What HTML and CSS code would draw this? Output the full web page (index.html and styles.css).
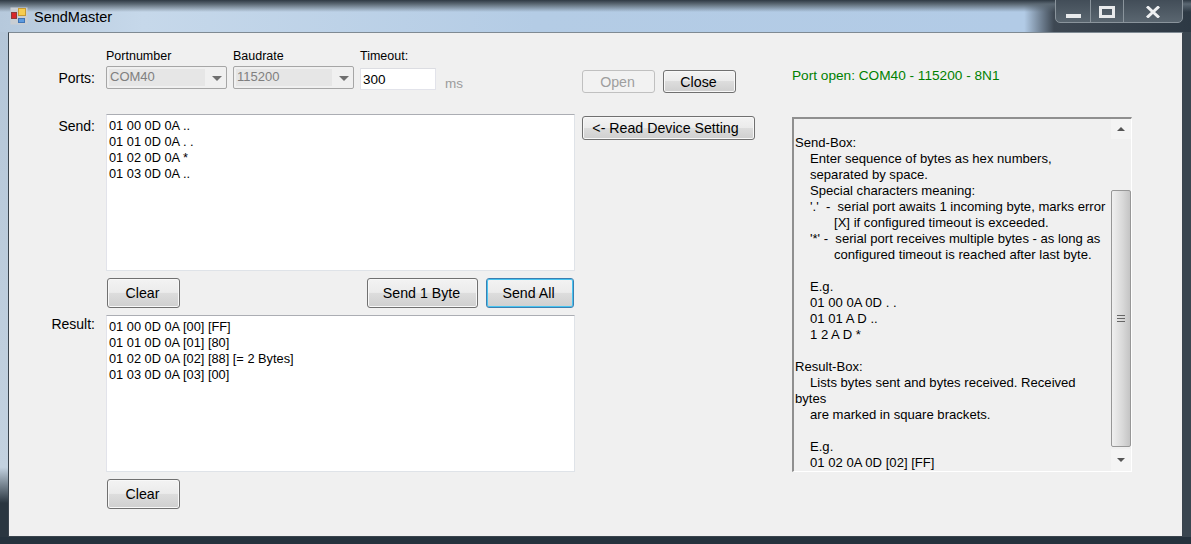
FILE: index.html
```html
<!DOCTYPE html>
<html lang="en">
<head>
<meta charset="utf-8">
<title>SendMaster</title>
<link rel="stylesheet" href="styles.css">
</head>
<body>
<div class="window">
  <div class="titlebar">
    <svg class="app-icon" width="18" height="18" viewBox="0 0 18 18"><rect x="0.5" y="0.5" width="17" height="17" fill="#c9ced3"/><rect x="1.5" y="5.5" width="5" height="6" fill="#d8272a" stroke="#8d3a3a"/><rect x="8.5" y="1.5" width="7" height="7" fill="#f6cd50" stroke="#c79b32"/><rect x="8.5" y="11.5" width="6" height="4" fill="#5c9be0" stroke="#3f74b5"/></svg>
    <span class="title">SendMaster</span>
    <div class="caption-btns">
      <div class="cap cap-min"><span class="min-glyph"></span></div>
      <div class="cap cap-max"><span class="max-glyph"></span></div>
      <div class="cap cap-close"><svg width="14" height="12" viewBox="0 0 14 12"><path d="M1 0.5 L13 11.5 M13 0.5 L1 11.5" stroke="#eef0f2" stroke-width="3"/></svg></div>
    </div>
  </div>
  <div class="panel">
    <div class="col-main">
      <div class="row ports-row">
        <div class="label ports-label">Ports:</div>
        <div class="field f-combo">
          <div class="cap-label">Portnumber</div>
          <div class="combo"><span class="combo-text">COM40</span><span class="combo-arrow"></span></div>
        </div>
        <div class="field f-combo">
          <div class="cap-label">Baudrate</div>
          <div class="combo"><span class="combo-text">115200</span><span class="combo-arrow"></span></div>
        </div>
        <div class="field f-time">
          <div class="cap-label">Timeout:</div>
          <div class="time-input">300</div>
        </div>
        <div class="ms">ms</div>
      </div>
      <div class="row send-row">
        <div class="label">Send:</div>
        <div class="textbox">01 00 0D 0A ..
01 01 0D 0A . .
01 02 0D 0A *
01 03 0D 0A ..</div>
      </div>
      <div class="row btn-row">
        <div class="label"></div>
        <div class="btn-wrap">
          <button class="btn btn-clear">Clear</button>
          <div class="btn-right">
            <button class="btn btn-send1">Send 1 Byte</button>
            <button class="btn btn-sendall">Send All</button>
          </div>
        </div>
      </div>
      <div class="row result-row">
        <div class="label">Result:</div>
        <div class="textbox">01 00 0D 0A [00] [FF]
01 01 0D 0A [01] [80]
01 02 0D 0A [02] [88] [= 2 Bytes]
01 03 0D 0A [03] [00]</div>
      </div>
      <div class="row clear-row">
        <div class="label"></div>
        <button class="btn btn-clear">Clear</button>
      </div>
    </div>
    <div class="col-mid">
      <div class="open-close">
        <button class="btn btn-open" disabled>Open</button>
        <button class="btn btn-close">Close</button>
      </div>
      <button class="btn btn-read">&lt;- Read Device Setting</button>
    </div>
    <div class="col-right">
      <div class="status">Port open: COM40 - 115200 - 8N1</div>
      <div class="help">
        <div class="help-text">
<p class="blank"></p>
<p>Send-Box:</p>
<p class="i1">Enter sequence of bytes as hex numbers,</p>
<p class="i1">separated by space.</p>
<p class="i1">Special characters meaning:</p>
<p class="i1">'.'  -  serial port awaits 1 incoming byte, marks error</p>
<p class="i2">[X] if configured timeout is exceeded.</p>
<p class="i1">'*' -  serial port receives multiple bytes - as long as</p>
<p class="i2">configured timeout is reached after last byte.</p>
<p class="blank"></p>
<p class="i1">E.g.</p>
<p class="i1">01 00 0A 0D . .</p>
<p class="i1">01 01 A D ..</p>
<p class="i1">1 2 A D *</p>
<p class="blank"></p>
<p>Result-Box:</p>
<p class="i1">Lists bytes sent and bytes received. Received</p>
<p>bytes</p>
<p class="i1">are marked in square brackets.</p>
<p class="blank"></p>
<p class="i1">E.g.</p>
<p class="i1">01 02 0A 0D [02] [FF]</p>
        </div>
        <div class="scrollbar">
          <div class="sb-btn sb-up"><span class="arrow-up"></span></div>
          <div class="sb-track">
            <div class="sb-thumb"><span class="grip"></span></div>
          </div>
          <div class="sb-btn sb-down"><span class="arrow-down"></span></div>
        </div>
      </div>
    </div>
  </div>
</div>
</body>
</html>
```
FILE: styles.css
```css
* { box-sizing: border-box; }
html, body { margin: 0; padding: 0; }
body {
  width: 1191px;
  height: 544px;
  overflow: hidden;
  font-family: "Liberation Sans", Arial, sans-serif;
  font-size: 14px;
  color: #000;
}
.window {
  width: 1191px;
  height: 544px;
  padding: 0 8px 7px;
  display: flex;
  flex-direction: column;
  background:
    linear-gradient(180deg, #2f3a44 0, #5b6873 4px, rgba(185,207,230,0) 12px),
    linear-gradient(90deg, #b6c9dc 0, #c6d8ea 12%, #b4cce5 45%, #b2cbe6 86%, #3e4853 88.5%, #2d3944 100%);
  position: relative;
}
.window::before {
  content: "";
  position: absolute;
  left: 0;
  top: 32px;
  width: 8px;
  height: 512px;
  background: linear-gradient(180deg, #b4c6d8 0, #c3d2e0 85%, #2a3640 92%);
}
.window::after {
  content: "";
  position: absolute;
  left: 0;
  right: 0;
  top: 32px;
  bottom: 0;
  background: linear-gradient(0deg, #25323d 0, #25323d 7px, transparent 7px), linear-gradient(90deg, transparent 0, transparent 1183px, #3a4650 1183px);
  pointer-events: none;
}
.titlebar {
  height: 32px;
  flex: none;
  display: flex;
  align-items: center;
  margin: 0 -8px;
  padding: 0 0 0 10px;
  position: relative;
}
.app-icon { flex: none; }
.title { margin-left: 6px; font-size: 14.5px; color: #000; padding-top: 1px; }
.caption-btns {
  position: absolute;
  top: -4px;
  left: 1055px;
  width: 128px;
  height: 27px;
  display: flex;
  border: 1px solid #8a949c;
  border-radius: 0 0 5px 5px;
  background: linear-gradient(180deg, #3f4a55, #5a6670);
}
.cap { display: flex; align-items: center; justify-content: center; height: 100%; border-right: 1px solid #8a949c; padding-top: 4px; }
.cap-min { width: 35px; }
.cap-max { width: 33px; }
.cap-close { flex: 1; border-right: 0; }
.min-glyph { width: 15px; height: 4px; margin-top: 8px; background: #e8eaec; }
.max-glyph { width: 16px; height: 12px; border: 3px solid #e8eaec; }
.panel {
  flex: 1;
  display: flex;
  position: relative;
  z-index: 1;
  background: #f0f0f0;
  border: 1px solid #3a444d;
  border-top-color: #7f8a93;
}
.col-main { width: 566px; flex: none; display: flex; flex-direction: column; }
.row { display: flex; }
.label { width: 97px; flex: none; text-align: right; padding-right: 11px; }
.ports-row { height: 81px; padding-top: 16px; }
.ports-label { padding-top: 21px; }
.field { display: flex; flex-direction: column; }
.f-combo { width: 121px; margin-right: 6px; }
.f-time { width: 76px; }
.cap-label { height: 17px; font-size: 12.5px; line-height: 15px; }
.combo {
  height: 23px;
  border: 1px solid #a6a6a6;
  border-radius: 2px;
  background: #f0f0f0;
  display: flex;
  align-items: stretch;
  padding: 2px 0 2px 2px;
}
.combo-text { width: 96px; background: #e6e6e6; color: #7f7f7f; font-size: 13px; line-height: 16px; padding-left: 1px; }
.combo-arrow {
  width: 0; height: 0;
  margin: 7px 0 0 7px;
  border-left: 5px solid transparent;
  border-right: 5px solid transparent;
  border-top: 5px solid #6f6f6f;
}
.time-input {
  height: 22px;
  margin-top: 2px;
  background: #fff;
  border: 1px solid #e2e3ea;
  border-top-color: #dcdde2;
  padding: 3px 2px 0;
  font-size: 13.5px;
  line-height: 16px;
}
.ms { color: #9c9c9c; font-size: 13.5px; margin: 27px 0 0 9px; }
.send-row, .result-row { height: 157px; }
.send-row .label { padding-top: 4px; }
.result-row .label { padding-top: 1px; }
.textbox {
  width: 469px;
  height: 157px;
  background: #fff;
  border: 1px solid #dfe3e8;
  border-top-color: #abadb3;
  border-left-color: #e2e3ea;
  padding: 3px 2px 0;
  line-height: 16px;
  font-size: 12.8px;
  white-space: pre;
}
.btn-row { height: 44px; padding-top: 7px; }
.btn-wrap { width: 469px; display: flex; justify-content: space-between; padding-right: 1px; padding-left: 1px; height: 30px; }
.btn-right { display: flex; gap: 8px; }
.clear-row { padding-top: 7px; }
.clear-row .btn { margin-left: 1px; }
.btn {
  font-family: "Liberation Sans", Arial, sans-serif;
  font-size: 14.2px;
  color: #000;
  height: 30px;
  padding: 0 2px 0 0;
  border: 1px solid #707070;
  border-radius: 3px;
  background: linear-gradient(180deg, #f3f3f3 0, #ebebeb 48%, #dddddd 50%, #cfcfcf 100%);
  box-shadow: inset 0 0 0 1px #f8f8f8;
}
.btn-clear { width: 73px; }
.btn-send1 { width: 111px; }
.btn-sendall { width: 88px; padding-right: 3px; border-color: #3c7fb1; box-shadow: inset 0 0 0 1px #48c4f0; }
.col-mid { width: 217px; flex: none; padding-left: 7px; display: flex; flex-direction: column; }
.open-close { display: flex; gap: 8px; margin-top: 37px; }
.btn-open, .btn-close { width: 73px; height: 23px; }
.btn-open { color: #9e9e9e; background: #f2f2f2; border-color: #c0c0c0; box-shadow: none; }
.btn-read { width: 173px; height: 24px; margin-top: 23px; padding-right: 6px; }
.col-right { width: 340px; flex: none; }
.status { color: #008000; font-size: 13.65px; height: 84px; padding-top: 35px; }
.help {
  width: 340px;
  height: 355px;
  border: solid;
  border-color: #8f8f8f #fff #fff #8f8f8f;
  border-width: 2px 1px 1px 2px;
  display: flex;
  overflow: hidden;
  background: #f0f0f0;
}
.help-text { flex: 1; line-height: 16px; height: 352px; overflow: hidden; font-size: 13.1px; padding-left: 1px; }
.help-text p { margin: 0; height: 16px; white-space: pre; }
.i1 { padding-left: 15px; }
.i2 { padding-left: 39px; }
.scrollbar { width: 20px; flex: none; display: flex; flex-direction: column; background: #f0f0f0; }
.sb-btn { display: flex; align-items: center; justify-content: center; background: #f4f4f4; }
.sb-up { height: 20px; }
.sb-down { height: 22px; }
.arrow-up { border-left: 4px solid transparent; border-right: 4px solid transparent; border-bottom: 4px solid #555; }
.arrow-down { border-left: 4px solid transparent; border-right: 4px solid transparent; border-top: 4px solid #555; }
.sb-track { flex: 1; padding-top: 51px; }
.sb-thumb {
  height: 257px;
  border: 1px solid #979797;
  border-radius: 2px;
  background: linear-gradient(90deg, #f0f0f0, #d8d8d8 60%, #c4c4c4);
  display: flex;
  align-items: center;
  justify-content: center;
}
.grip { width: 8px; height: 7px; border-top: 1px solid #666; border-bottom: 1px solid #666; background: linear-gradient(180deg, transparent 2px, #666 2px, #666 3px, transparent 3px); }
```
